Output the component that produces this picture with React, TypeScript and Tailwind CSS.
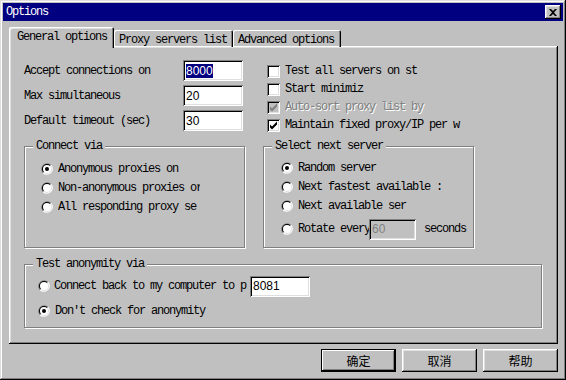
import React from 'react'

const raised =
  'shadow-[inset_-1px_-1px_#000,inset_1px_1px_#fff,inset_-2px_-2px_#808080,inset_2px_2px_#dfdfdf]'
const sunken =
  'shadow-[inset_1px_1px_#808080,inset_-1px_-1px_#fff,inset_2px_2px_#000,inset_-2px_-2px_#dfdfdf]'

function Radio({ checked }: { checked?: boolean }) {
  return (
    <svg width="12" height="12" viewBox="0 0 12 12" className="shrink-0">
      <path d="M10.24 1.76 A6 6 0 0 0 1.76 10.24 Z" fill="#808080" />
      <path d="M10.24 1.76 A6 6 0 0 1 1.76 10.24 Z" fill="#fff" />
      <path d="M9.54 2.46 A5 5 0 0 0 2.46 9.54 Z" fill="#000" />
      <path d="M9.54 2.46 A5 5 0 0 1 2.46 9.54 Z" fill="#dfdfdf" />
      <circle cx="6" cy="6" r="4" fill="#fff" />
      {checked && <circle cx="6" cy="6" r="2" fill="#000" />}
    </svg>
  )
}

function Check({ checked, disabled }: { checked?: boolean; disabled?: boolean }) {
  return (
    <div className={`w-[13px] h-[13px] shrink-0 ${sunken} ${disabled ? 'bg-[#c0c0c0]' : 'bg-white'}`}>
      {checked && (
        <svg width="13" height="13" viewBox="0 0 13 13">
          <path
            d="M3 5 L5 7 L10 2 L10 5 L5 10 L3 8 Z"
            fill={disabled ? '#808080' : '#000'}
            transform="translate(0,0.5)"
          />
        </svg>
      )}
    </div>
  )
}

function Field({ value, w, selected, disabled }: { value: string; w: string; selected?: boolean; disabled?: boolean }) {
  return (
    <div
      className={`${w} h-[21px] shrink-0 ${sunken} ${disabled ? 'bg-[#c0c0c0] text-[#808080]' : 'bg-white text-black'} flex items-center pl-[3px] font-['Liberation_Sans',sans-serif] text-[12px] tracking-normal`}
    >
      <span className={selected ? 'bg-[#000080] text-white leading-[14px]' : 'leading-[14px]'}>{value}</span>
    </div>
  )
}

function Group({ title, className, children }: { title: string; className: string; children: React.ReactNode }) {
  return (
    <div
      className={`relative border border-[#808080] shadow-[inset_1px_1px_#fff,1px_1px_#fff] ${className}`}
    >
      <span className="absolute -top-[8px] left-[8px] bg-[#c0c0c0] px-[3px] leading-[14px]">{title}</span>
      {children}
    </div>
  )
}

function RadioRow({ checked, label, w, className = '' }: { checked?: boolean; label: string; w: string; className?: string }) {
  return (
    <div className={`flex items-center h-[19px] ${className}`}>
      <Radio checked={checked} />
      <span className={`ml-[5px] ${w} overflow-hidden whitespace-nowrap leading-[14px]`}>{label}</span>
    </div>
  )
}

function Button({ label, isDefault }: { label: string; isDefault?: boolean }) {
  return (
    <div
      className={`w-[75px] h-[23px] flex items-center justify-center font-['Noto_Sans_CJK_SC',sans-serif] text-[12px] tracking-normal ${
        isDefault
          ? 'shadow-[inset_-1px_-1px_#000,inset_1px_1px_#000,inset_-2px_-2px_#000,inset_2px_2px_#fff,inset_-3px_-3px_#808080]'
          : raised
      }`}
    >
      {label}
    </div>
  )
}

export default function App() {
  return (
    <div className="w-[566px] h-[380px] bg-[#c0c0c0] p-[3px] text-black text-[12px] tracking-[-1.2px] font-['Liberation_Mono','Noto_Sans_CJK_SC',monospace] shadow-[inset_-1px_-1px_#000,inset_1px_1px_#dfdfdf,inset_-2px_-2px_#808080,inset_2px_2px_#fff]">
      {/* title bar */}
      <div className="h-[18px] bg-[#000080] flex items-center justify-between pl-[3px] pr-[2px]">
        <span className="text-white leading-[14px]">Options</span>
        <div className={`w-[16px] h-[14px] bg-[#c0c0c0] ${raised} flex items-center justify-center`}>
          <svg width="8" height="7" viewBox="0 0 8 7">
            <path d="M0 0h2l2 2 2-2h2L5 3.5 8 7H6L4 5 2 7H0l3-3.5Z" fill="#000" />
          </svg>
        </div>
      </div>

      {/* tabs */}
      <div className="flex items-end ml-[6px] mt-[7px] h-[19px] relative z-10">
        <div className="h-[21px] w-[105px] -mb-[1px] bg-[#c0c0c0] rounded-t-[2px] shadow-[inset_1px_1px_#fff,inset_-1px_0_#000,inset_-2px_0_#808080,inset_2px_2px_#dfdfdf] pl-[8px] pt-[3px] leading-[14px]">
          General options
        </div>
        <div className="h-[17px] w-[119px] rounded-t-[2px] shadow-[inset_1px_1px_#fff,inset_-1px_0_#000,inset_-2px_0_#808080] pl-[5px] pt-[3px] leading-[14px]">
          Proxy servers list
        </div>
        <div className="h-[17px] w-[108px] rounded-t-[2px] shadow-[inset_1px_1px_#fff,inset_-1px_0_#000,inset_-2px_0_#808080] pl-[5px] pt-[3px] leading-[14px]">
          Advanced options
        </div>
      </div>

      {/* panel */}
      <div className="ml-[6px] w-[549px] h-[298px] -mt-[1px] shadow-[inset_-1px_-1px_#000,inset_1px_1px_#fff,inset_-2px_-2px_#808080,inset_2px_2px_#dfdfdf]">
        <div className="flex pt-[14px] pl-[15px]">
          <div className="w-[243px] flex flex-col">
            {[
              ['Accept connections on', '8000', true],
              ['Max simultaneous', '20', false],
              ['Default timeout (sec)', '30', false],
            ].map(([label, value, sel]) => (
              <div key={label as string} className="flex items-start h-[25px]">
                <span className="w-[159px] pt-[4px] leading-[14px] whitespace-nowrap">{label}</span>
                <Field value={value as string} w="w-[60px]" selected={sel as boolean} />
              </div>
            ))}
          </div>
          <div className="flex flex-col pt-[2px]">
            <div className="flex items-center h-[18px]">
              <Check />
              <span className="ml-[5px] leading-[14px]">Test all servers on st</span>
            </div>
            <div className="flex items-center h-[18px]">
              <Check />
              <span className="ml-[5px] leading-[14px]">Start minimiz</span>
            </div>
            <div className="flex items-center h-[18px]">
              <Check checked disabled />
              <span className="ml-[5px] leading-[14px] text-[#808080] [text-shadow:1px_1px_#fff]">Auto-sort proxy list by</span>
            </div>
            <div className="flex items-center h-[18px]">
              <Check checked />
              <span className="ml-[5px] leading-[14px]">Maintain fixed proxy/IP per w</span>
            </div>
          </div>
        </div>

        <div className="flex mt-[11px] pl-[15px]">
          <Group title="Connect via" className="w-[221px] h-[102px] pl-[16px] pt-[12px]">
            <RadioRow checked label="Anonymous proxies on" w="w-[160px]" />
            <RadioRow label="Non-anonymous proxies or" w="w-[142px]" />
            <RadioRow label="All responding proxy se" w="w-[160px]" />
          </Group>
          <Group title="Select next server" className="ml-[18px] w-[211px] h-[102px] pl-[17px] pt-[11px]">
            <RadioRow checked label="Random server" w="w-[160px]" />
            <RadioRow label="Next fastest available :" w="w-[160px]" />
            <RadioRow label="Next available ser" w="w-[110px]" />
            <div className="flex items-center h-[24px] mt-[2px]">
              <Radio />
              <span className="ml-[5px] w-[71px] overflow-hidden whitespace-nowrap leading-[14px]">Rotate every</span>
              <Field value="60" w="w-[47px]" disabled />
              <span className="ml-[8px] leading-[14px]">seconds</span>
            </div>
          </Group>
        </div>

        <div className="pl-[15px] mt-[16px]">
          <Group title="Test anonymity via" className="w-[518px] h-[64px] pl-[13px] pt-[10px]">
            <div className="flex items-center h-[22px]">
              <Radio />
              <span className="ml-[4px] w-[196px] whitespace-nowrap overflow-hidden leading-[14px]">Connect back to my computer to p</span>
              <Field value="8081" w="w-[60px]" />
            </div>
            <RadioRow checked label="Don't check for anonymity" w="w-[200px]" className="mt-[4px]" />
          </Group>
        </div>
      </div>

      {/* buttons */}
      <div className="flex justify-end gap-[6px] mt-[5px] pr-[5px]">
        <Button label="确定" isDefault />
        <Button label="取消" />
        <Button label="帮助" />
      </div>
    </div>
  )
}
